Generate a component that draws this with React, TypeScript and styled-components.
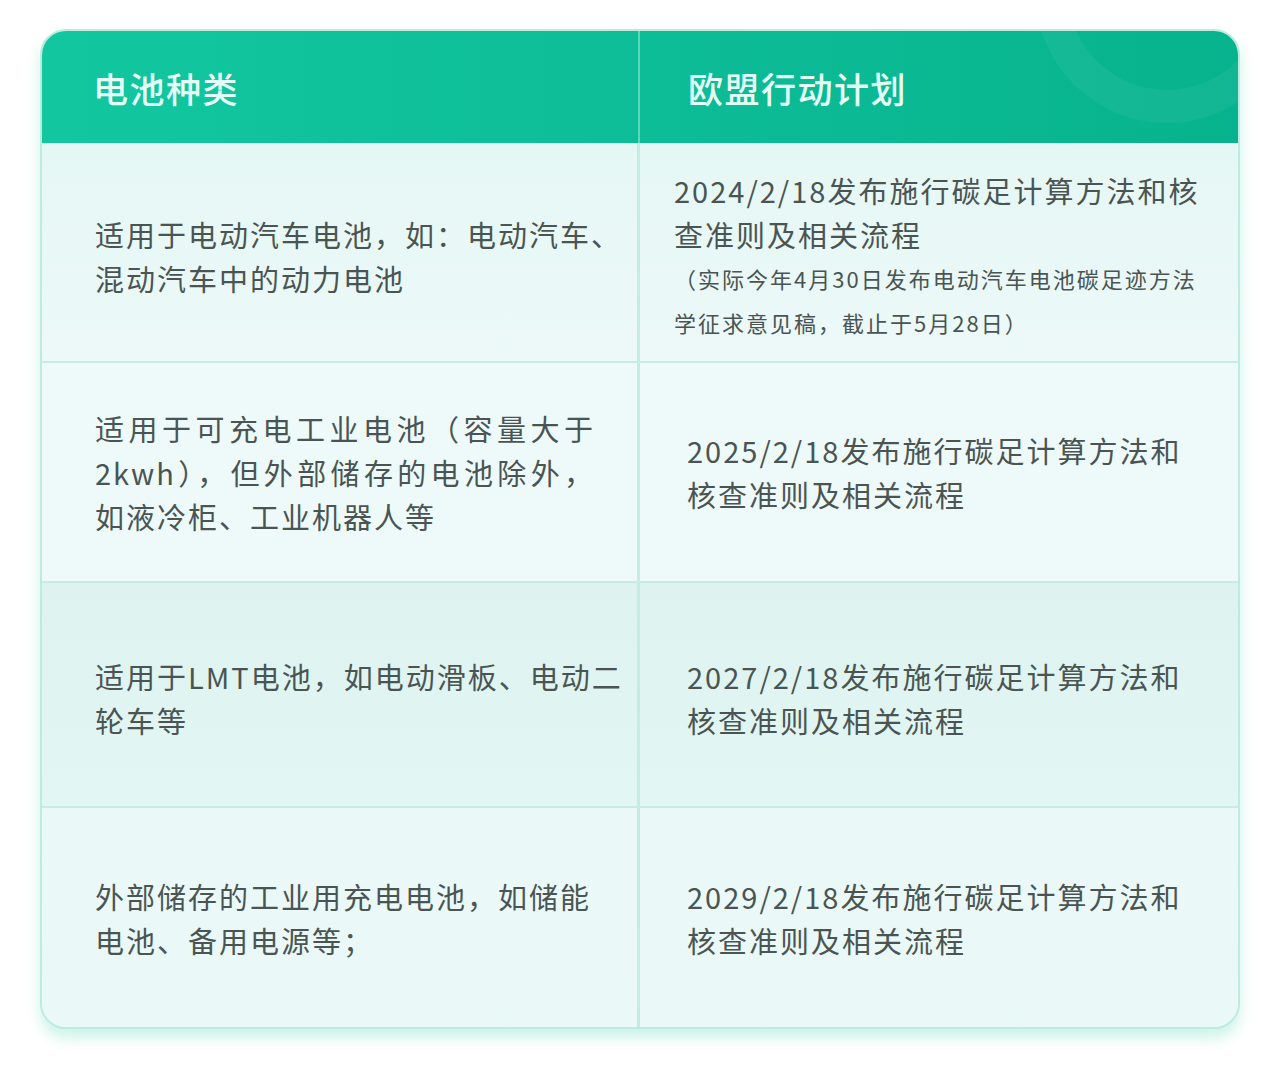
import React from 'react';
import styled, { createGlobalStyle } from 'styled-components';

const GlobalStyle = createGlobalStyle`
  html, body {
    margin: 0;
    padding: 0;
    background: #ffffff;
  }
  body {
    font-family: "Noto Sans CJK SC", "Noto Sans", sans-serif;
  }
`;

const Page = styled.div`
  padding: 29px 40px 40px;
  width: 1280px;
  box-sizing: border-box;
`;

const Card = styled.div`
  position: relative;
  width: 1200px;
  box-sizing: border-box;
  border: 2px solid #bdebdf;
  border-radius: 26px;
  overflow: hidden;
  background: #eaf8f7;
  box-shadow: 0 9px 14px rgba(90, 215, 175, 0.3);
`;

const HeaderRow = styled.div`
  position: relative;
  display: grid;
  grid-template-columns: 598px 1fr;
  height: 112px;
  background: linear-gradient(90deg, #12c7a0 0%, #0dbd97 50%, #07b38d 100%);
  overflow: hidden;
`;

// faint ring drawn in the header's top-right corner
const Ring = styled.div`
  position: absolute;
  left: 993px;
  top: -172px;
  width: 264px;
  height: 264px;
  border-radius: 50%;
  box-sizing: border-box;
  border: 33px solid rgba(255, 255, 255, 0.05);
  pointer-events: none;
`;

const HeaderCell = styled.div<{ $indent: number; $divider?: boolean }>`
  position: relative;
  display: flex;
  align-items: center;
  padding-left: ${p => p.$indent}px;
  color: #e6fff6;
  font-size: 35px;
  font-weight: 500;
  letter-spacing: 1.5px;
  border-right: ${p => (p.$divider ? '2px solid rgba(140, 235, 205, 0.6)' : 'none')};
`;

const Row = styled.div<{ $height: number; $bg: string; $last?: boolean }>`
  display: grid;
  grid-template-columns: 598px 1fr;
  height: ${p => p.$height}px;
  box-sizing: border-box;
  background: ${p => p.$bg};
  border-bottom: ${p => (p.$last ? 'none' : '2px solid #c6ece5')};
`;

const Cell = styled.div<{ $indent: number; $shift: number; $divider?: boolean }>`
  display: flex;
  flex-direction: column;
  justify-content: center;
  padding-left: ${p => p.$indent}px;
  padding-top: ${p => p.$shift}px;
  box-sizing: border-box;
  border-right: ${p => (p.$divider ? '3px solid #c4ebe4' : 'none')};
  color: #4a5553;
`;

const Line = styled.div<{ $width?: number }>`
  font-size: 29px;
  line-height: 44px;
  letter-spacing: 2px;
  white-space: nowrap;
  width: ${p => (p.$width ? `${p.$width}px` : 'auto')};
  text-align: ${p => (p.$width ? 'justify' : 'left')};
  text-align-last: ${p => (p.$width ? 'justify' : 'auto')};
`;

const Note = styled.div`
  font-size: 22px;
  line-height: 44px;
  letter-spacing: 2px;
  white-space: nowrap;
`;

type RowData = {
  height: number;
  shift: number;
  bg: string;
  left: { text: string; width?: number }[];
  rightIndent: number;
  right: string[];
  notes?: string[];
};

const rows: RowData[] = [
  {
    height: 220,
    shift: 8,
    bg: 'linear-gradient(180deg, #e5f7f4 0%, #ecf9f8 100%)',
    left: [{ text: '适用于电动汽车电池，如：电动汽车、' }, { text: '混动汽车中的动力电池' }],
    rightIndent: 34,
    right: ['2024/2/18发布施行碳足计算方法和核', '查准则及相关流程'],
    notes: ['（实际今年4月30日发布电动汽车电池碳足迹方法', '学征求意见稿，截止于5月28日）'],
  },
  {
    height: 220,
    shift: 0,
    bg: 'linear-gradient(180deg, #eef9f9 0%, #eefaf9 100%)',
    left: [
      { text: '适用于可充电工业电池（容量大于', width: 500 },
      { text: '2kwh），但外部储存的电池除外，', width: 500 },
      { text: '如液冷柜、工业机器人等' },
    ],
    rightIndent: 47,
    right: ['2025/2/18发布施行碳足计算方法和', '核查准则及相关流程'],
  },
  {
    height: 225,
    shift: 6,
    bg: 'linear-gradient(180deg, #def3f0 0%, #e2f6f3 100%)',
    left: [{ text: '适用于LMT电池，如电动滑板、电动二' }, { text: '轮车等' }],
    rightIndent: 47,
    right: ['2027/2/18发布施行碳足计算方法和', '核查准则及相关流程'],
  },
  {
    height: 219,
    shift: 0,
    bg: 'linear-gradient(180deg, #ebf8f8 0%, #e9f9f7 100%)',
    left: [{ text: '外部储存的工业用充电电池，如储能' }, { text: '电池、备用电源等；' }],
    rightIndent: 47,
    right: ['2029/2/18发布施行碳足计算方法和', '核查准则及相关流程'],
  },
];

const App: React.FC = () => {
  return (
    <Page>
      <GlobalStyle />
      <Card>
        <HeaderRow>
          <Ring />
          <HeaderCell $indent={51} $divider>
            电池种类
          </HeaderCell>
          <HeaderCell $indent={48}>欧盟行动计划</HeaderCell>
        </HeaderRow>
        {rows.map((row, i) => (
          <Row key={i} $height={row.height} $bg={row.bg} $last={i === rows.length - 1}>
            <Cell $indent={53} $shift={row.shift} $divider>
              {row.left.map((l, j) => (
                <Line key={j} $width={l.width}>
                  {l.text}
                </Line>
              ))}
            </Cell>
            <Cell $indent={row.rightIndent} $shift={row.shift}>
              {row.right.map((t, j) => (
                <Line key={j}>{t}</Line>
              ))}
              {row.notes?.map((t, j) => (
                <Note key={j}>{t}</Note>
              ))}
            </Cell>
          </Row>
        ))}
      </Card>
    </Page>
  );
};

export default App;
